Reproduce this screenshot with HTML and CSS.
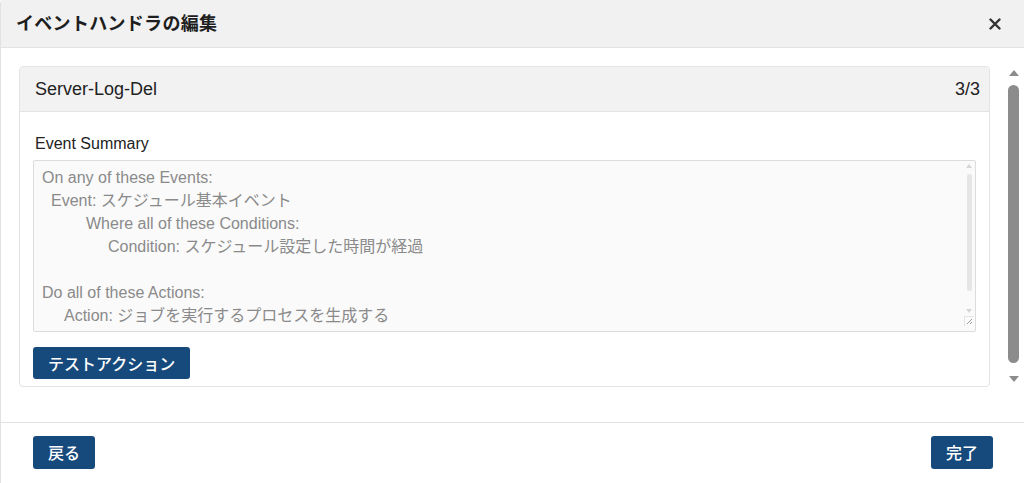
FILE: index.html
```html
<!DOCTYPE html>
<html lang="ja">
<head>
<meta charset="utf-8">
<title>イベントハンドラの編集</title>
<link rel="stylesheet" href="styles.css">
</head>
<body>
<div class="dialog">
  <header class="dialog-header">
    <h1 class="dialog-title">イベントハンドラの編集</h1>
    <button class="close-btn" aria-label="閉じる">
      <svg width="12" height="12" viewBox="0 0 12 12"><path d="M1.5 1.5 L10.5 10.5 M10.5 1.5 L1.5 10.5" stroke="#333" stroke-width="2.4" stroke-linecap="round"/></svg>
    </button>
  </header>
  <div class="dialog-body">
    <div class="body-content">
      <section class="card">
        <div class="card-header">
          <span class="card-name">Server-Log-Del</span>
          <span class="card-count">3/3</span>
        </div>
        <div class="card-body">
          <div class="field-label">Event Summary</div>
          <div class="summary-box">
            <div class="summary-text">
              <div class="line">On any of these Events:</div>
              <div class="line ind1">Event: スケジュール基本イベント</div>
              <div class="line ind2">Where all of these Conditions:</div>
              <div class="line ind3">Condition: スケジュール設定した時間が経過</div>
              <div class="line blank"></div>
              <div class="line">Do all of these Actions:</div>
              <div class="line ind4">Action: ジョブを実行するプロセスを生成する</div>
            </div>
            <div class="mini-scroll">
              <span class="mini-up"></span>
              <span class="mini-thumb"></span>
              <span class="mini-down"></span>
              <span class="mini-grip">
                <svg width="7" height="7" viewBox="0 0 7 7"><path d="M6 1 L1 6 M6 4 L4 6" stroke="#999" stroke-width="1"/></svg>
              </span>
            </div>
          </div>
          <button class="btn">テストアクション</button>
        </div>
      </section>
    </div>
    <div class="page-scroll">
      <span class="arrow-up"></span>
      <span class="thumb"></span>
      <span class="arrow-down"></span>
    </div>
  </div>
  <footer class="dialog-footer">
    <button class="btn">戻る</button>
    <button class="btn">完了</button>
  </footer>
</div>
</body>
</html>
```

FILE: styles.css
```css
* { box-sizing: border-box; }
html, body { margin: 0; padding: 0; }
body {
  font-family: "Liberation Sans", Arial, "Noto Sans CJK JP", sans-serif;
  color: #222;
  background: #fff;
}
.dialog {
  width: 1024px;
  height: 483px;
  display: flex;
  flex-direction: column;
  border-left: 1px solid #e2e2e2;
  border-top-left-radius: 4px;
}
.dialog-header {
  height: 48px;
  flex: none;
  display: flex;
  align-items: center;
  justify-content: space-between;
  background: #f1f1f1;
  border-bottom: 1px solid #e3e3e3;
  padding: 0 23px 0 15px;
}
.dialog-title {
  margin: 0;
  font-family: "Noto Sans CJK JP", sans-serif;
  font-size: 18px;
  font-weight: 700;
  color: #1e1e1e;
  line-height: 24px;
  margin-top: -3px;
  letter-spacing: 0.3px;
}
.close-btn {
  border: 0;
  background: none;
  padding: 0;
  width: 12px;
  height: 12px;
  display: flex;
}
.dialog-body {
  flex: 1;
  display: flex;
  min-height: 0;
}
.body-content {
  flex: 1;
  padding: 18px 12px 0 18px;
}
.card {
  border: 1px solid #e3e3e3;
  border-radius: 4px;
  background: #fff;
}
.card-header {
  height: 45px;
  display: flex;
  align-items: center;
  justify-content: space-between;
  background: #f2f2f2;
  border-bottom: 1px solid #e3e3e3;
  border-radius: 4px 4px 0 0;
  padding: 0 9px 0 15px;
  font-size: 18px;
  color: #222;
}
.card-body {
  padding: 22px 13px 7px 13px;
}
.field-label {
  font-size: 16px;
  line-height: 20px;
  padding-left: 2px;
  color: #222;
  margin-bottom: 6px;
}
.summary-box {
  height: 172px;
  border: 1px solid #dcdcdc;
  border-radius: 2px;
  background: #fafafa;
  display: flex;
  margin-bottom: 15px;
}
.summary-text {
  flex: 1;
  padding: 5px 8px;
  font-size: 16px;
  line-height: 23px;
  color: #8a8a8a;
  overflow: hidden;
}
.line { white-space: nowrap; height: 23px; }
.ind1 { padding-left: 9px; }
.ind2 { padding-left: 44px; }
.ind3 { padding-left: 66px; }
.ind4 { padding-left: 22px; }
.mini-scroll {
  width: 12px;
  flex: none;
  display: flex;
  flex-direction: column;
  align-items: center;
  padding-top: 3px;
}
.mini-up, .mini-down {
  width: 0; height: 0;
  border-left: 3px solid transparent;
  border-right: 3px solid transparent;
}
.mini-up { border-bottom: 4px solid #d6d6d6; }
.mini-down { border-top: 4px solid #d6d6d6; margin-top: 18px; }
.mini-thumb {
  width: 5px;
  height: 117px;
  margin-top: 6px;
  background: #e6e6e6;
  border-radius: 3px;
}
.mini-grip {
  margin-top: 3px;
  width: 10px;
  height: 10px;
  display: flex;
  align-items: center;
  justify-content: center;
  border-top: 1px solid #e5e5e5;
  border-left: 1px solid #e5e5e5;
}
.btn {
  font-family: "Noto Sans CJK JP", sans-serif;
  font-size: 16px;
  font-weight: 500;
  color: #fff;
  background: #174a7c;
  border: 0;
  border-radius: 3px;
  height: 32px;
  padding: 0 15px;
  line-height: 32px;
}
.page-scroll {
  width: 22px;
  flex: none;
  display: flex;
  flex-direction: column;
  align-items: center;
  padding-top: 22px;
  padding-left: 1px;
}
.arrow-up, .arrow-down {
  width: 0; height: 0;
  border-left: 5px solid transparent;
  border-right: 5px solid transparent;
}
.arrow-up { border-bottom: 6px solid #8c8c8c; }
.arrow-down { border-top: 6px solid #8c8c8c; margin-top: 13px; }
.thumb {
  margin-top: 9px;
  width: 11px;
  height: 278px;
  background: #8c8c8c;
  border-radius: 6px;
}
.dialog-footer {
  height: 61px;
  flex: none;
  border-top: 1px solid #e3e3e3;
  display: flex;
  justify-content: space-between;
  align-items: flex-start;
  padding: 13px 31px 0 32px;
}
.dialog-footer .btn { height: 33px; line-height: 33px; }
```
